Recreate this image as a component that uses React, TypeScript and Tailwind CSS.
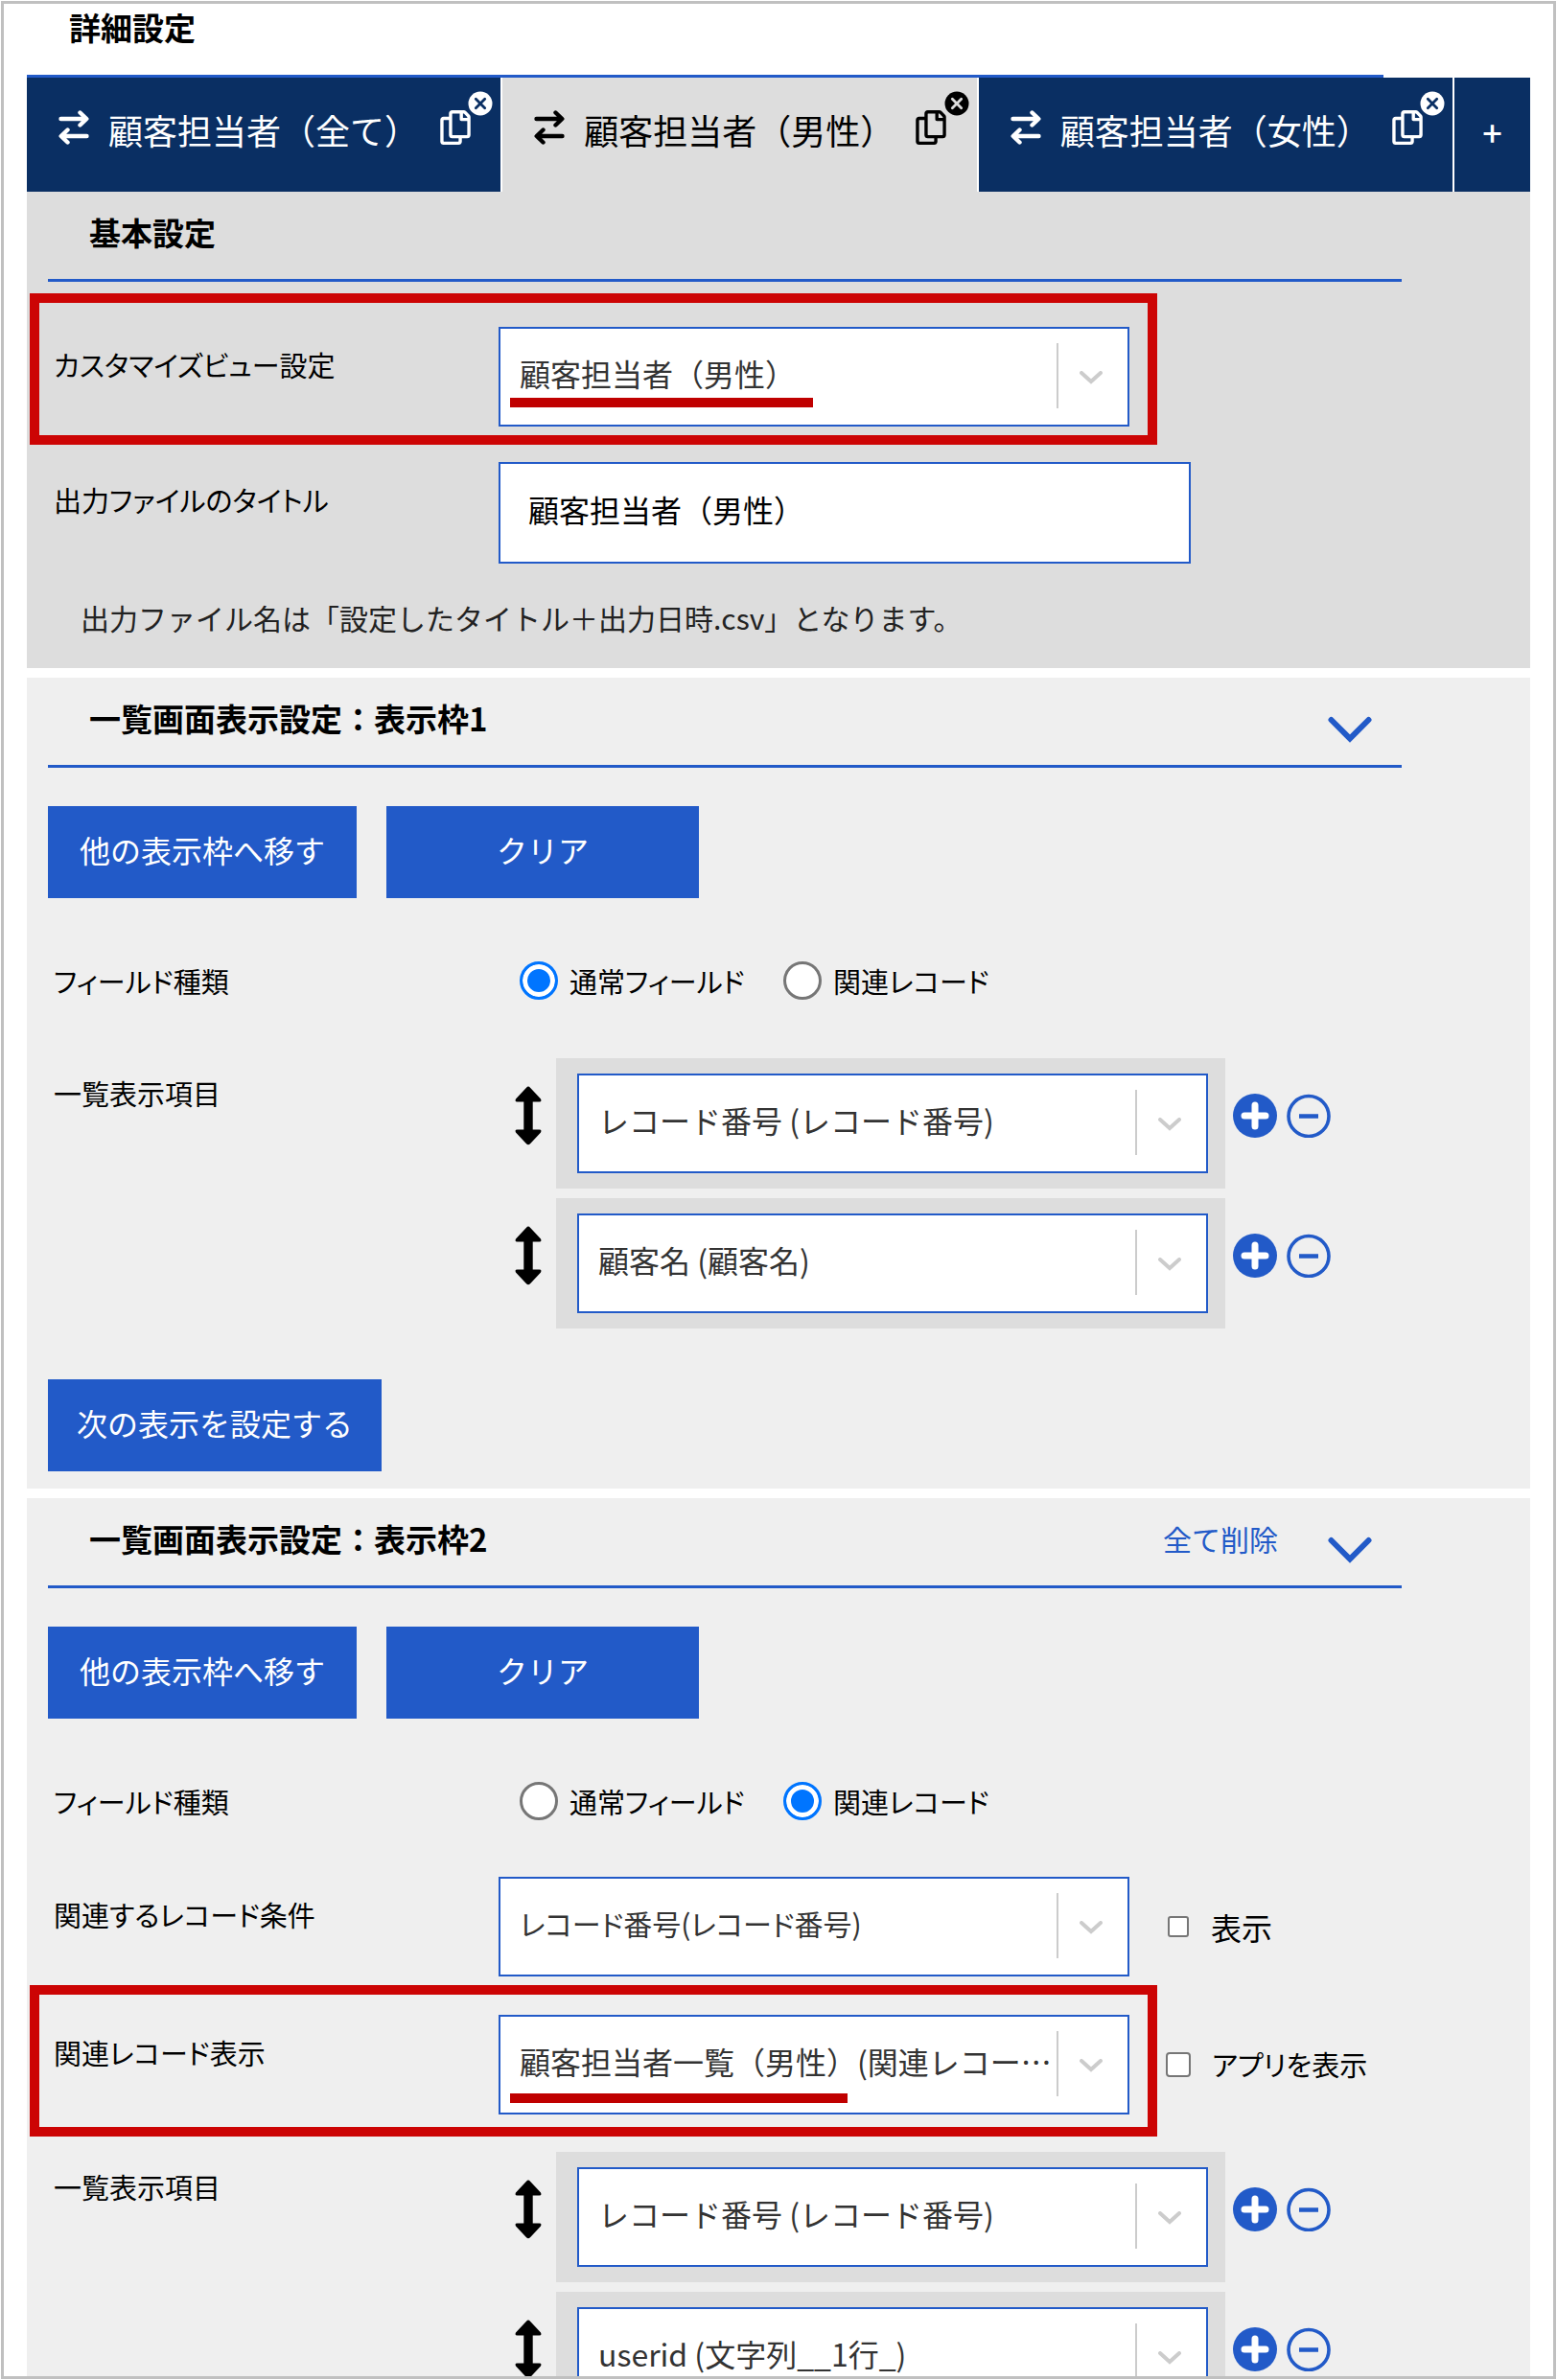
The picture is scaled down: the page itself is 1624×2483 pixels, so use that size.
import type { ReactNode } from 'react';
import clsx from 'clsx';
import { FaRegCopy } from 'react-icons/fa';

const tabs = [
  { name: '顧客担当者（全て）', active: false },
  { name: '顧客担当者（男性）', active: true },
  { name: '顧客担当者（女性）', active: false },
];

function SwapIcon() {
  return (
    <svg viewBox="0 0 32 36" fill="none" stroke="currentColor" strokeWidth="4.4" strokeLinecap="round" strokeLinejoin="round" className="mb-1 h-9 w-8 shrink-0" aria-hidden="true">
      <path d="M2.5 9H29M22.5 2.5L29.3 9l-6.8 6.5" />
      <path d="M29.5 27H3M9.5 20.5L2.7 27l6.8 6.5" />
    </svg>
  );
}

function CloseIcon({ dark }: { dark: boolean }) {
  return (
    <svg viewBox="0 0 26 26" className="size-[26px]" aria-hidden="true">
      <circle cx="13" cy="13" r="12.5" fill="currentColor" />
      <path d="M8.3 8.3l9.4 9.4M17.7 8.3l-9.4 9.4" stroke={dark ? '#ddd' : '#0a2f63'} strokeWidth="2.8" strokeLinecap="round" />
    </svg>
  );
}

function SelectBox({ id, label, value, compact, underline }: {
  id: string;
  label?: string;
  value: string;
  compact?: boolean;
  underline?: ReactNode;
}) {
  return (
    <div className="relative w-[658px]">
      <select
        id={id}
        aria-label={label}
        defaultValue={value}
        className={clsx(
          'block h-[104px] w-full appearance-none border-2 border-[#225ac8] bg-white pr-20 pb-2 pl-5 text-[#333]',
          compact ? 'text-[30px] [font-feature-settings:"palt"]' : 'text-[32px]'
        )}
      >
        <option>{value}</option>
      </select>
      <span className="pointer-events-none absolute top-[17px] right-[74px] h-[68px] w-0.5 bg-[#ccc]" />
      <svg viewBox="0 0 24 14" fill="none" stroke="#ccc" strokeWidth="4" strokeLinecap="round" className="pointer-events-none absolute top-[46px] right-7 h-3.5 w-6" aria-hidden="true">
        <path d="M2 2l10 9L22 2" />
      </svg>
      {underline}
    </div>
  );
}

function RowLabel({ htmlFor, className = 'pt-[19px]', children }: { htmlFor?: string; className?: string; children: ReactNode }) {
  const cls = clsx('w-[470px] shrink-0 pl-1.5 text-[29px] leading-10 [font-feature-settings:"palt"]', className);
  return htmlFor ? <label htmlFor={htmlFor} className={cls}>{children}</label> : <div className={cls}>{children}</div>;
}

function SectionHeader({ title, children }: { title: string; children?: ReactNode }) {
  return (
    <div className="mr-[134px] ml-[22px] flex h-[94px] items-center border-b-[3px] border-[#225ac8] pb-2 pl-[43px]">
      <h2 className="mr-auto text-[33px] leading-10 font-bold">{title}</h2>
      {children}
    </div>
  );
}

function CollapseButton() {
  return (
    <button type="button" aria-label="開閉" className="mt-6 mr-[31px] text-[#225ac8]">
      <svg viewBox="0 0 46 28" fill="none" stroke="currentColor" strokeWidth="6" strokeLinecap="round" className="h-7 w-[46px]" aria-hidden="true">
        <path d="M3.5 4L23 23.5 42.5 4" />
      </svg>
    </button>
  );
}

function BlueButton({ className, children }: { className: string; children: ReactNode }) {
  return (
    <button type="button" className={clsx('h-24 bg-[#225ac8] pb-1.5 text-[32px] text-white', className)}>
      {children}
    </button>
  );
}

function MoveClearButtons() {
  return (
    <div className="mt-10 flex gap-[31px]">
      <BlueButton className="w-[322px]">他の表示枠へ移す</BlueButton>
      <BlueButton className="w-[326px]">クリア</BlueButton>
    </div>
  );
}

function FieldType({ name, value }: { name: string; value: string }) {
  return (
    <div role="radiogroup" aria-labelledby={`${name}-label`} className="mt-[65px] flex h-[42px] items-center text-[29px] leading-10 [font-feature-settings:'palt']">
      <div id={`${name}-label`} className="w-[492px] pl-1.5">フィールド種類</div>
      {['通常フィールド', '関連レコード'].map((option) => (
        <label key={option} className="flex w-[275px] items-center gap-3 whitespace-nowrap">
          <input
            type="radio"
            name={name}
            defaultChecked={option === value}
            className="size-10 shrink-0 appearance-none rounded-full border-[3px] border-[#767676] bg-white checked:border-[#0075ff] checked:bg-[#0075ff] checked:shadow-[inset_0_0_0_5px_#fff]"
          />
          {option}
        </label>
      ))}
    </div>
  );
}

function ItemList({ id, items }: { id: string; items: string[] }) {
  return (
    <div className="flex">
      <RowLabel className="pt-4">一覧表示項目</RowLabel>
      <div className="flex flex-col gap-2.5">
        {items.map((item, i) => (
          <div key={item} className="flex items-center">
            <svg viewBox="0 0 28 62" className="mr-[15px] mb-4 ml-[17px] h-[62px] w-7" aria-hidden="true">
              <path
                d="M14 0.5Q15 0.5 16 1.8L27 13.5Q28.4 16.5 25.5 16.5H18.7V45.5H25.5Q28.4 45.5 27 48.5L16 60.2Q14 62.4 12 60.2L1 48.5Q-0.4 45.5 2.5 45.5H9.3V16.5H2.5Q-0.4 16.5 1 13.5L12 1.8Q13 0.5 14 0.5Z"
                fill="#000"
              />
            </svg>
            <div className="bg-[#ddd] py-4 pr-[18px] pl-[22px]">
              <SelectBox id={`${id}-${i}`} label={`一覧表示項目 ${i + 1}`} value={item} />
            </div>
            <div className="mb-4 ml-2 flex gap-2.5">
              <button type="button" aria-label="追加">
                <svg viewBox="0 0 46 46" className="size-[46px]" aria-hidden="true">
                  <circle cx="23" cy="23" r="23" fill="#225ac8" />
                  <path d="M23 12v22M12 23h22" stroke="#fff" strokeWidth="7" strokeLinecap="round" />
                </svg>
              </button>
              <button type="button" aria-label="削除">
                <svg viewBox="0 0 46 46" fill="none" stroke="#225ac8" className="size-[46px]" aria-hidden="true">
                  <circle cx="23" cy="23.5" r="21" strokeWidth="3.6" />
                  <path d="M13 23.5h20" strokeWidth="4.5" />
                </svg>
              </button>
            </div>
          </div>
        ))}
      </div>
    </div>
  );
}

export default function App() {
  return (
    <div lang="ja" className="h-screen bg-white p-px font-['Noto_Sans_CJK_JP',sans-serif] text-black">
      <div className="h-full overflow-hidden border-[3px] border-[#c0c0c0] px-6">
        <h1 className="mr-[153px] h-[77px] border-b-[3px] border-[#225ac8] pt-1 pl-11 text-[33px] leading-10 font-bold">詳細設定</h1>

        {/* Tabs */}
        <div className="flex h-[119px] bg-[#ddd]">
          {tabs.map((tab) => (
            <div
              key={tab.name}
              className={clsx(
                'relative flex flex-1 items-center border-r-2 border-white pb-3 pl-[33px]',
                tab.active ? 'bg-[#ddd] text-black' : 'bg-[#0a2f63] text-white'
              )}
            >
              <SwapIcon />
              <button type="button" className="ml-5 text-[36px] leading-10 whitespace-nowrap">{tab.name}</button>
              <button type="button" aria-label="複製" className="mb-1 ml-[22px]">
                <FaRegCopy className="h-9 w-8" />
              </button>
              <button type="button" aria-label="閉じる" className="absolute top-3.5 right-2">
                <CloseIcon dark={tab.active} />
              </button>
            </div>
          ))}
          <button type="button" aria-label="タブを追加" className="w-[79px] bg-[#0a2f63] pb-2 text-[36px] font-medium text-white">+</button>
        </div>

        {/* Basic settings */}
        <section className="bg-[#ddd] pb-[31px]">
          <SectionHeader title="基本設定" />
          <div className="mt-[47px] pl-[22px]">
            <div className="relative flex w-fit">
              <RowLabel htmlFor="view">カスタマイズビュー設定</RowLabel>
              <SelectBox
                id="view"
                value="顧客担当者（男性）"
                underline={<span className="absolute top-[74px] left-3 h-2.5 w-[316px] bg-[#c00000]" />}
              />
              <span className="pointer-events-none absolute -top-[35px] -right-[29px] -bottom-[19px] -left-[19px] border-10 border-[#cc0404]" />
            </div>
            <div className="mt-[37px] flex">
              <RowLabel htmlFor="title">出力ファイルのタイトル</RowLabel>
              <input
                id="title"
                type="text"
                defaultValue="顧客担当者（男性）"
                className="h-[106px] w-[722px] border-2 border-[#225ac8] bg-white pb-2 pl-[29px] text-[32px]"
              />
            </div>
            <p className="mt-9 mb-0.5 pl-[34px] text-[30px] leading-10 text-[#222]">
              出力ファイル名は「設定したタイトル＋出力日時.csv」となります。
            </p>
          </div>
        </section>

        {/* Display frame 1 */}
        <section className="mt-2.5 bg-[#efefef] pb-[18px]">
          <SectionHeader title="一覧画面表示設定：表示枠1">
            <CollapseButton />
          </SectionHeader>
          <div className="pl-[22px]">
            <MoveClearButtons />
            <FieldType name="type1" value="通常フィールド" />
            <div className="mt-[60px]">
              <ItemList id="items1" items={['レコード番号 (レコード番号)', '顧客名 (顧客名)']} />
            </div>
            <BlueButton className="mt-[53px] w-[348px]">次の表示を設定する</BlueButton>
          </div>
        </section>

        {/* Display frame 2 */}
        <section className="mt-2.5 bg-[#efefef] pb-[18px]">
          <SectionHeader title="一覧画面表示設定：表示枠2">
            <button type="button" className="mr-[52px] text-[30px] leading-10 text-[#225ac8]">全て削除</button>
            <CollapseButton />
          </SectionHeader>
          <div className="pl-[22px]">
            <MoveClearButtons />
            <FieldType name="type2" value="関連レコード" />
            <div className="mt-[58px] flex">
              <RowLabel htmlFor="condition">関連するレコード条件</RowLabel>
              <SelectBox id="condition" value="レコード番号(レコード番号)" compact />
              <label className="ml-10 flex items-center gap-[23px] text-[32px]">
                <input type="checkbox" className="size-[22px] appearance-none rounded-[3px] border-2 border-[#767676] bg-white" />
                表示
              </label>
            </div>
            <div className="mt-10 flex">
              <div className="relative flex">
                <RowLabel htmlFor="related">関連レコード表示</RowLabel>
                <SelectBox
                  id="related"
                  value="顧客担当者一覧（男性）(関連レコー…"
                  underline={<span className="absolute top-[82px] left-3 h-2.5 w-[352px] bg-[#c00000]" />}
                />
                <span className="pointer-events-none absolute -top-[31px] -right-[29px] -bottom-[23px] -left-[19px] border-10 border-[#cc0404]" />
              </div>
              <label className="ml-[38px] flex items-center gap-[22px] text-[29px] [font-feature-settings:'palt']">
                <input type="checkbox" className="size-[26px] appearance-none rounded-[4px] border-2 border-[#767676] bg-white" />
                アプリを表示
              </label>
            </div>
            <div className="mt-[39px]">
              <ItemList id="items2" items={['レコード番号 (レコード番号)', 'userid (文字列__1行_)']} />
            </div>
          </div>
        </section>
      </div>
    </div>
  );
}
